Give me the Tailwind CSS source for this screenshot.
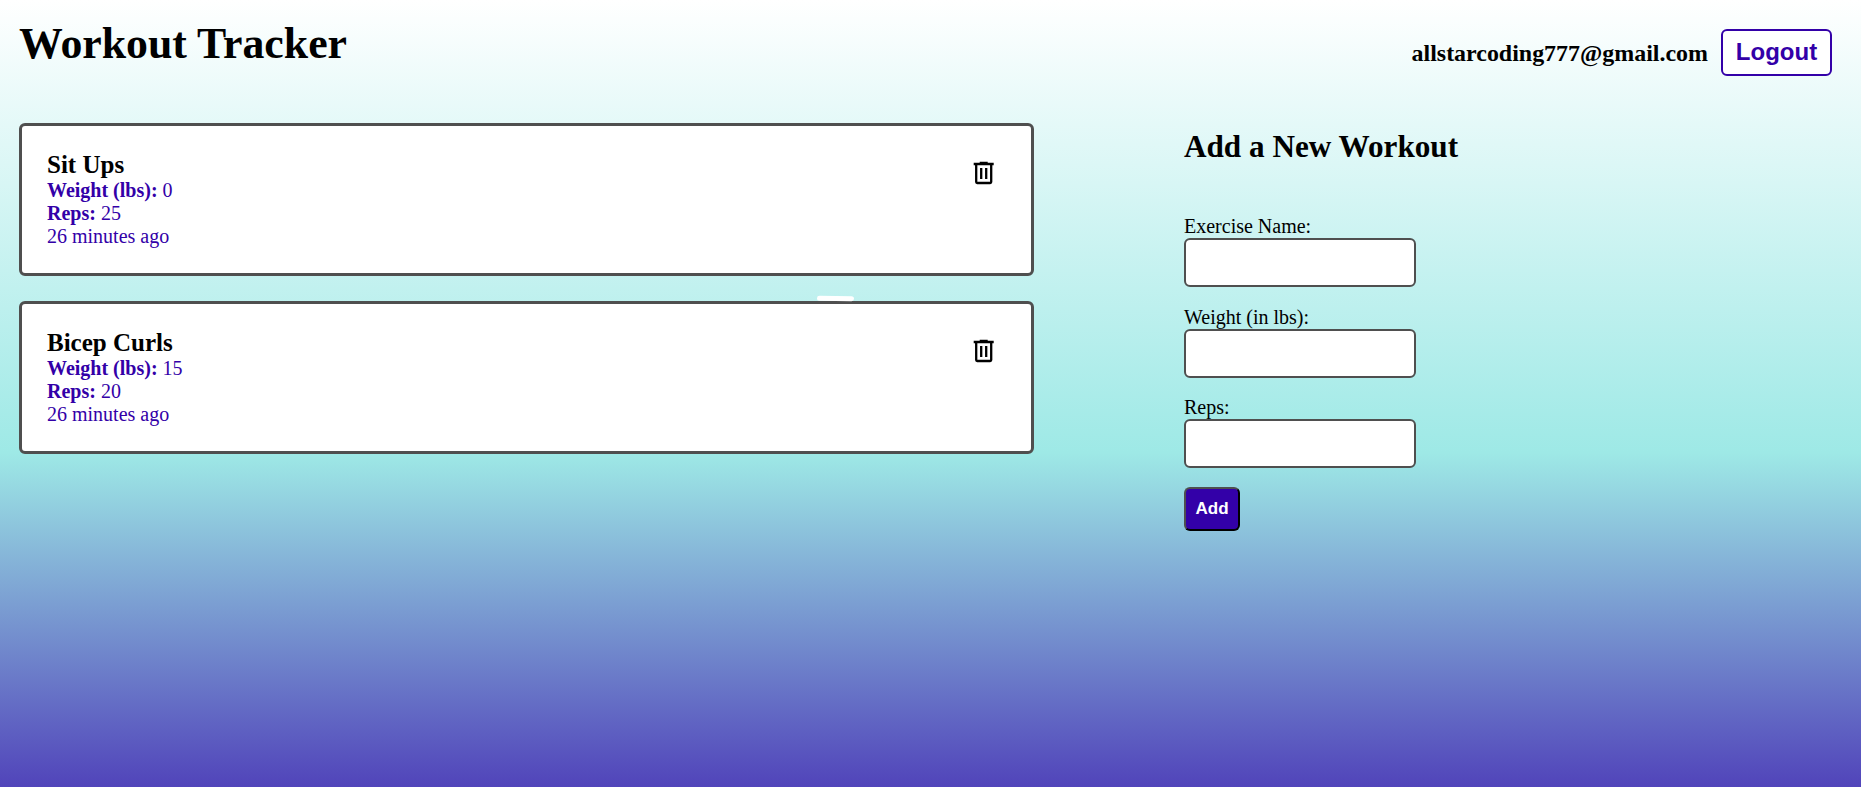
<!DOCTYPE html>
<html lang="en"><head><meta charset="utf-8"><title>Workout Tracker</title>
<script src="https://cdn.jsdelivr.net/npm/@tailwindcss/browser@4"></script></head>
<body class="h-[787px] overflow-hidden bg-[linear-gradient(180deg,#ffffff_0%,#9ee9e6_57.5%,#5144ba_100%)] text-[20px] leading-[23px] text-black font-['Liberation_Serif',serif]">
<header class="flex h-[123px] justify-between pl-[19px] pr-[29px]">
<h1 class="mt-[18px] text-[43.8px] leading-[50px] font-bold">Workout Tracker</h1>
<div class="mt-[29px] flex h-[47px] items-center gap-[13px]">
<span class="pt-[2px] text-[23.95px] leading-[27px] font-bold">allstarcoding777@gmail.com</span>
<button class="h-[47px] w-[111px] rounded-md border-2 border-[#3300a8] bg-white pb-[2px] text-[24px] font-bold text-[#3300a8] font-['Liberation_Sans',sans-serif]">Logout</button>
</div>
</header>
<main class="flex pl-[19px]">
<section class="flex w-[1015px] flex-col gap-[25px]">
<article class="flex h-[153px] justify-between rounded-md border-3 border-[#4f4f4f] bg-white pt-[24px] pl-[25px] pr-[32px] text-[#3300a8]">
<div><h2 class="text-[25px] leading-[29px] font-bold text-black">Sit Ups</h2>
<p><b>Weight (lbs):</b> 0</p><p><b>Reps:</b> 25</p><p>26 minutes ago</p></div>
<svg class="mt-[8px] h-[30px] w-[30px] text-black" viewBox="0 0 30 30" fill="none" stroke="currentColor" stroke-width="2.300"><path d="M4.700 6H24.700M10.700 4.800H18.700M7.200 6V24Q7.200 25 8.200 25H21.200Q22.200 25 22.200 24V6M12.200 10V21M17.200 10V21"/></svg>
</article>
<article class="relative flex h-[153px] justify-between rounded-md border-3 border-[#4f4f4f] bg-white pt-[24px] pl-[25px] pr-[32px] text-[#3300a8]">
<span class="absolute left-[795px] top-[-8px] h-[5px] w-[37px] rotate-1 rounded-sm bg-white"></span>
<div><h2 class="text-[25px] leading-[29px] font-bold text-black">Bicep Curls</h2>
<p><b>Weight (lbs):</b> 15</p><p><b>Reps:</b> 20</p><p>26 minutes ago</p></div>
<svg class="mt-[8px] h-[30px] w-[30px] text-black" viewBox="0 0 30 30" fill="none" stroke="currentColor" stroke-width="2.300"><path d="M4.700 6H24.700M10.700 4.800H18.700M7.200 6V24Q7.200 25 8.200 25H21.200Q22.200 25 22.200 24V6M12.200 10V21M17.200 10V21"/></svg>
</article>
</section>
<form class="ml-[150px] flex w-[400px] flex-col items-start pt-[6px]">
<h2 class="mb-[50px] text-[31.2px] leading-[36px] font-bold">Add a New Workout</h2>
<label for="n">Exercise Name:</label><input id="n" class="mb-[19px] h-[49px] w-[232px] rounded-md border-2 border-[#4f4f4f] bg-white px-2">
<label for="w">Weight (in lbs):</label><input id="w" class="mb-[18px] h-[49px] w-[232px] rounded-md border-2 border-[#4f4f4f] bg-white px-2">
<label for="r">Reps:</label><input id="r" class="mb-[19px] h-[49px] w-[232px] rounded-md border-2 border-[#4f4f4f] bg-white px-2">
<button type="button" class="h-[44px] w-[56px] rounded-md border-2 border-t-[#4f4f4f] border-l-[#4f4f4f] border-r-black border-b-black bg-[#3300a8] pb-[2px] text-[17px] font-bold text-white font-['Liberation_Sans',sans-serif]">Add</button>
</form>
</main>
</body></html>
